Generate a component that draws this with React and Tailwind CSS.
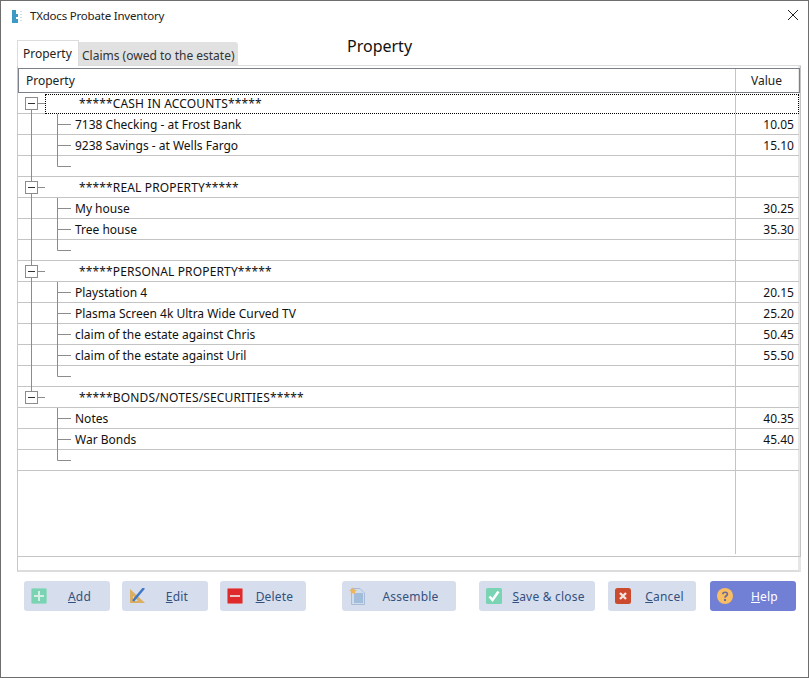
import React from 'react';

const groups = [
  {
    title: '*****CASH IN ACCOUNTS*****',
    items: [
      { name: '7138 Checking - at Frost Bank', value: '10.05' },
      { name: '9238 Savings - at Wells Fargo', value: '15.10' },
    ],
  },
  {
    title: '*****REAL PROPERTY*****',
    items: [
      { name: 'My house', value: '30.25' },
      { name: 'Tree house', value: '35.30' },
    ],
  },
  {
    title: '*****PERSONAL PROPERTY*****',
    items: [
      { name: 'Playstation 4', value: '20.15' },
      { name: 'Plasma Screen 4k Ultra Wide Curved TV', value: '25.20' },
      { name: 'claim of the estate against Chris', value: '50.45' },
      { name: 'claim of the estate against Uril', value: '55.50' },
    ],
  },
  {
    title: '*****BONDS/NOTES/SECURITIES*****',
    items: [
      { name: 'Notes', value: '40.35' },
      { name: 'War Bonds', value: '45.40' },
    ],
  },
];

const LINE = '#8c8c8c';

// tree connector gutter, one per row
const RootGutter = ({ first, last }) => (
  <svg width="27" height="21" className="shrink-0">
    {!first && <path d="M13.5 0V4" stroke={LINE} />}
    {!last && <path d="M13.5 16V21" stroke={LINE} />}
    <rect x="7.5" y="4.5" width="12" height="12" fill="#fff" stroke={LINE} />
    <path d="M10 10.5H17" stroke="#333" />
    <path d="M20 10.5H27" stroke={LINE} />
  </svg>
);

const ChildGutter = ({ showRoot, end }) => (
  <svg width="53" height="21" className="shrink-0">
    {showRoot && <path d="M13.5 0V21" stroke={LINE} />}
    <path d={end ? 'M39.5 0V10.5H53' : 'M39.5 0V21M39.5 10.5H53'} stroke={LINE} fill="none" />
  </svg>
);

const RootRow = ({ title, first, last }) => (
  <div className="flex h-[21px] border-b border-[#c4c4c4] mr-[1px]">
    <RootGutter first={first} last={last} />
    {first ? (
      <div className="flex flex-1 h-[20px] mt-[1px] bg-white border border-dotted border-black">
        <div className="flex-1 pl-[33px] leading-[18px] tracking-[0.15px]">{title}</div>
        <div className="w-[63px] border-l border-[#c4c4c4]" />
      </div>
    ) : (
      <div className="flex flex-1">
        <div className="flex-1 pl-[34px] leading-[22px] tracking-[0.15px]">{title}</div>
        <div className="w-[64px] border-l border-[#c4c4c4]" />
      </div>
    )}
  </div>
);

const ChildRow = ({ name, value, showRoot, end }) => (
  <div className="flex h-[21px] border-b border-[#c4c4c4] mr-[1px]">
    <ChildGutter showRoot={showRoot} end={end} />
    <div className="flex-1 pl-[4px] leading-[22px]">{name}</div>
    <div className="w-[64px] border-l border-[#c4c4c4] text-right pr-[5px] leading-[22px]">{value}</div>
  </div>
);

const AddIcon = () => (
  <svg width="16" height="16" viewBox="0 0 16 16">
    <rect x="0.5" y="0.5" width="15" height="15" rx="1" fill="#7ad4b4" stroke="#9cd8c8" />
    <path d="M8 3V13M3 8H13" stroke="#d5efe6" strokeWidth="2" />
  </svg>
);

const EditIcon = () => (
  <svg width="17" height="16" viewBox="0 0 17 16">
    <path d="M1 1L16 15H1Z" fill="#dcae62" />
    <path d="M4 8L9 13H4Z" fill="#d5dcec" />
    <path d="M4 13L15 0" stroke="#3f78c4" strokeWidth="2.5" />
  </svg>
);

const DeleteIcon = () => (
  <svg width="16" height="16" viewBox="0 0 16 16">
    <rect x="0.5" y="0.5" width="15" height="15" rx="1" fill="#de2a2a" stroke="#e07a80" />
    <path d="M3 8H13" stroke="#ecc6c4" strokeWidth="2" />
  </svg>
);

const AssembleIcon = () => (
  <svg width="16" height="18" viewBox="0 0 16 18">
    <path d="M2.5 1.5H11L15.5 6V17.5H2.5Z" fill="#cfdcec" stroke="#a8bcd8" />
    <rect x="5" y="6" width="9" height="10" fill="#a2bcdc" />
    <path d="M4 0L5.1 2.6L8 2.9L5.8 4.8L6.5 7.6L4 6.1L1.5 7.6L2.2 4.8L0 2.9L2.9 2.6Z" fill="#eeb45e" />
  </svg>
);

const SaveIcon = () => (
  <svg width="16" height="16" viewBox="0 0 16 16">
    <rect width="16" height="16" rx="1.5" fill="#7ad4b4" />
    <path d="M3.5 8.5L6.5 12L12.5 3.5" stroke="#fff" strokeWidth="2.6" fill="none" />
  </svg>
);

const CancelIcon = () => (
  <svg width="16" height="16" viewBox="0 0 16 16">
    <rect width="16" height="16" rx="2.5" fill="#cc4a2e" />
    <path d="M5 5L11 11M11 5L5 11" stroke="#f5e4e0" strokeWidth="2.4" />
  </svg>
);

const HelpIcon = () => (
  <svg width="16" height="16" viewBox="0 0 16 16">
    <circle cx="8" cy="8" r="8" fill="#f9bd64" />
    <path d="M5.8 6.2C5.8 3.6 10.4 3.6 10.4 6.2C10.4 7.8 8 7.8 8 9.8" stroke="#6c6c94" strokeWidth="1.7" fill="none" />
    <rect x="7" y="11" width="2" height="2" fill="#6c6c94" />
  </svg>
);

const ActionButton = ({ icon, hot, rest, width, textPad = '', blue, className = '' }) => (
  <button
    className={`flex items-center h-[30px] rounded-[3px] text-[12px] ${width} ${className} ${
      blue ? 'bg-[#717fd5] text-white' : 'bg-[#d6deed] text-[#34507f]'
    }`}
  >
    <span className="w-[7px] shrink-0" />
    <span className="shrink-0 flex items-center">{icon}</span>
    <span className={`flex-1 text-center tracking-[0.2px] pt-[1px] ${textPad}`}>
      {hot && <span className="underline">{hot}</span>}
      {rest}
    </span>
  </button>
);

export default function App() {
  return (
    <div className="w-[809px] h-[678px] flex flex-col bg-white border border-[#6e6e6e] text-[12px] text-[#111] font-['Noto_Sans','Open_Sans',sans-serif] overflow-hidden">
      {/* title bar */}
      <div className="flex items-center h-[31px] shrink-0 pl-[9px] pr-[9px]">
        <svg width="16" height="16" viewBox="0 0 16 16" className="shrink-0">
          <path d="M2 1H6V5H8V8H6V10H8V14H2Z" fill="#3d9ac4" />
          <path d="M11 2V3M11 5V6M11 8V9M11 11V12" stroke="#8cc4dc" />
        </svg>
        <span className="ml-[4px] -mt-[2px] flex-1 text-[11.5px] tracking-[-0.2px] text-[#222]">TXdocs Probate Inventory</span>
        <svg width="12" height="12" viewBox="0 0 12 12" className="shrink-0 -mt-[3px]">
          <path d="M1 1L11 11M11 1L1 11" stroke="#222" />
        </svg>
      </div>

      {/* tabs and page heading */}
      <div className="flex items-end h-[34px] shrink-0 ml-[16px] mr-[7px] border-b border-[#dcdcdc]">
        <div className="h-[26px] w-[62px] -mb-px bg-white border border-b-0 border-[#dcdcdc] pl-[5px] leading-[26px] text-[#222]">
          Property
        </div>
        <div className="h-[23px] w-[159px] bg-[#e1e1e1] rounded-tr-[3px] pl-[3px] leading-[27px] text-[#333]">
          Claims (owed to the estate)
        </div>
        <div className="ml-[109px] self-start pt-[3px] text-[16px] leading-[22px]">Property</div>
      </div>

      {/* tab page */}
      <div className="h-[506px] shrink-0 ml-[16px] mr-[7px] border-l border-[#c8c8c8] border-r-[3px] border-r-[#e6e6e6] border-b-2 border-b-[#dcdcdc] flex flex-col">
        <div className="h-[491px] shrink-0 border-b border-r border-[#c4c4c4] -mr-[3px] pt-[2px] flex flex-col">
          <div className="flex h-[25px] shrink-0 border border-[#7b808c]">
            <div className="flex-1 pl-[7px] leading-[23px] text-[#222]">Property</div>
            <div className="w-[64px] border-l border-[#c4c4c4] text-center pr-[2px] leading-[23px] text-[#222]">Value</div>
          </div>
          <div className="flex-1 min-h-0">
            {groups.map((group, g) => {
              const lastGroup = g === groups.length - 1;
              return (
                <div key={group.title}>
                  <RootRow title={group.title} first={g === 0} last={lastGroup} />
                  {group.items.map((item) => (
                    <ChildRow key={item.name} name={item.name} value={item.value} showRoot={!lastGroup} />
                  ))}
                  <ChildRow name="" value="" showRoot={!lastGroup} end />
                </div>
              );
            })}
            <div className="h-[83px] w-[64px] ml-auto mr-[1px] border-l border-[#c4c4c4]" />
          </div>
        </div>
      </div>

      {/* footer buttons */}
      <div className="flex pl-[23px] pt-[9px]">
        <ActionButton icon={<AddIcon />} hot="A" rest="dd" width="w-[86px]" textPad="pl-[2px]" />
        <ActionButton icon={<EditIcon />} hot="E" rest="dit" width="w-[86px]" className="ml-[12px]" />
        <ActionButton icon={<DeleteIcon />} hot="D" rest="elete" width="w-[86px]" className="ml-[12px]" />
        <ActionButton icon={<AssembleIcon />} rest="Assemble" width="w-[114px]" className="ml-[36px]" />
        <ActionButton icon={<SaveIcon />} hot="S" rest="ave & close" width="w-[116px]" className="ml-[23px]" />
        <ActionButton icon={<CancelIcon />} hot="C" rest="ancel" width="w-[88px]" textPad="pl-[2px]" className="ml-[13px]" />
        <ActionButton icon={<HelpIcon />} hot="H" rest="elp" width="w-[86px]" blue className="ml-[14px]" />
      </div>
    </div>
  );
}
